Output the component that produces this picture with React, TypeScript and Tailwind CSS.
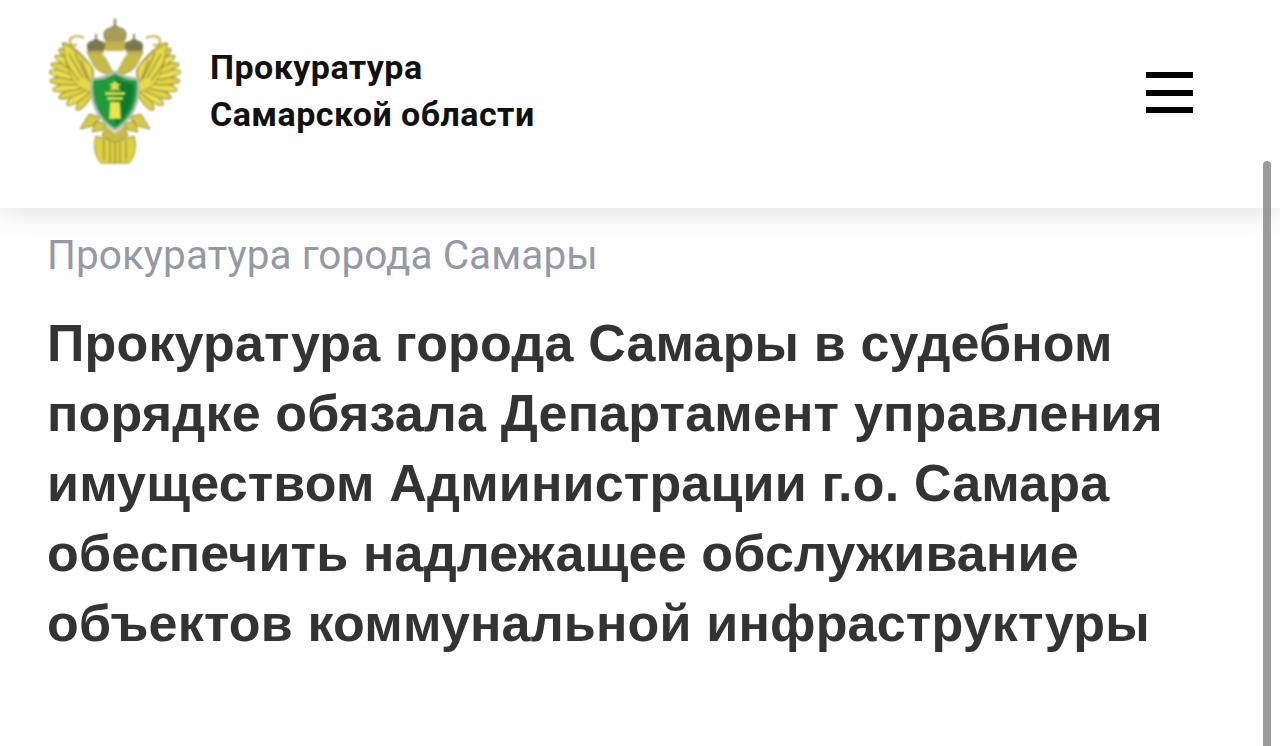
import React from 'react';

// tips of the wing feathers, left wing, in emblem coordinates
const tips = [
  [28, 92], [18, 87], [10, 80], [4, 72], [1, 63], [0, 54], [2, 46], [6, 38], [10, 31], [14, 25],
];

const Wing = () => (
  <g>
    {tips.map(([x, y], i) => {
      const bx = 44;
      const by = 54 + (9 - i) * 1.6;
      const dx = x - bx;
      const dy = y - by;
      const len = Math.sqrt(dx * dx + dy * dy);
      const angle = (Math.atan2(dy, dx) * 180) / Math.PI;
      return (
        <ellipse
          key={i}
          cx={bx + dx / 2}
          cy={by + dy / 2}
          rx={len / 2}
          ry={4.4}
          fill={i % 2 ? '#eadf52' : '#e0d244'}
          stroke="#8f8734"
          strokeWidth={1}
          transform={`rotate(${angle} ${bx + dx / 2} ${by + dy / 2})`}
        />
      );
    })}
    <path d="M14 25c10 6 20 14 29 24l2 26c-9-2-17-6-21-13-5-10-9-25-10-37z" fill="#e6da4a" stroke="#968d36" strokeWidth="0.9" />
    <path d="M20 36l14 24M26 35l12 26M16 43l14 20M32 42l9 22" stroke="#968d36" strokeWidth="1.3" fill="none" />
    <path d="M35 20c-8-4-15-1-14 4 1 4 5 4 7 2" fill="none" stroke="#c8bc52" strokeWidth="2.4" />
    <path d="M40 96l-9 15 13-3 8-9zM47 103l-4 11 10-2 4-6z" fill="#d6c948" stroke="#8f8734" strokeWidth="0.9" />
  </g>
);

const Crown = ({ x, y, s, fill }: { x: number; y: number; s: number; fill: string }) => (
  <g transform={`translate(${x} ${y}) scale(${s})`}>
    <path d="M-8 6c-3-6 0-10 4-10l4-3 4 3c4 0 7 4 4 10z" fill={fill} stroke="#6c6942" strokeWidth="0.7" />
    <path d="M-8 6h16v3H-8z" fill="#b8ac4c" />
    <rect x="-1" y="-12" width="2" height="5" fill="#8f8a68" />
  </g>
);

const Emblem = () => (
  <svg viewBox="0 0 132 146" className="w-[132px] h-[146px] shrink-0 blur-[0.8px]">
    <Wing />
    <g transform="translate(132 0) scale(-1 1)">
      <Wing />
    </g>
    {/* necks and heads */}
    <path d="M38 33c8-2 16 2 20 10 3 6 5 10 8 15-8-2-16-3-20-9-3-5-6-10-8-16z" fill="#c7bb48" stroke="#8f8a3c" strokeWidth="0.8" />
    <path d="M94 33c-8-2-16 2-20 10-3 6-5 10-8 15 8-2 16-3 20-9 3-5 6-10 8-16z" fill="#c7bb48" stroke="#8f8a3c" strokeWidth="0.8" />
    <path d="M52 24h28l-5 9h-18z" fill="#c2b54c" />
    <path d="M66 33l3 6 6 3-6 3-3 6-3-6-6-3 6-3z" fill="#ffffff" />
    <Crown x={47} y={27} s={0.95} fill="#7b7750" />
    <Crown x={85} y={27} s={0.95} fill="#7b7750" />
    <Crown x={66} y={15} s={1.2} fill="#a89d58" />
    {/* tail */}
    <path d="M47 118c-3 10-1 21 5 27h28c6-6 8-17 5-27l-19 6z" fill="#dfd143" stroke="#9c9338" strokeWidth="1" />
    <path d="M55 122v20M61 124v21M66 124v22M71 124v21M77 122v20" stroke="#9c9338" strokeWidth="1.3" />
    <path d="M56 108l10 8 10-8 3 10-13 7-13-7z" fill="#c9bc44" stroke="#9c9338" strokeWidth="0.8" />
    {/* shield */}
    <path d="M66 54c7 5 15 7 23 7 2 20-4 39-23 51-19-12-25-31-23-51 8 0 16-2 23-7z" fill="#1f9a3c" stroke="#b4b9b0" strokeWidth="3" />
    <path d="M66 60c5 3 11 5 18 6 1 16-3 31-18 41z" fill="#0d7c2e" />
    {/* pillar */}
    <path d="M66 62l2 3 4 1-3 3 3 3H60l3-3-3-3 4-1z" fill="#e5d84a" />
    <rect x="56" y="74" width="20" height="3" fill="#e5d84a" />
    <rect x="58" y="79" width="16" height="3" fill="#e5d84a" />
    <path d="M61 84h10l1 17H60z" fill="#efe24f" />
  </svg>
);

export default function App() {
  return (
    <div className="relative w-full h-[746px] overflow-hidden bg-white font-['Roboto',sans-serif]">
      <header className="h-[208px] pl-[49px] pr-[87px] pt-[18px] flex items-start justify-between shadow-[0_4px_30px_rgba(0,0,0,0.12)] bg-white relative">
        <div className="flex items-start gap-[29px]">
          <Emblem />
          <div className="pt-[26px] text-[34px] leading-[47px] font-bold tracking-[0.45px] text-[#111111]">
            <div>Прокуратура</div>
            <div>Самарской области</div>
          </div>
        </div>
        <div className="mt-[54px] w-[47px] flex flex-col gap-[11.5px]">
          <div className="h-[6px] bg-black" />
          <div className="h-[6px] bg-black" />
          <div className="h-[6px] bg-black" />
        </div>
      </header>
      <main className="pl-[47px] pr-[48px] pt-[24px]">
        <div className="text-[40.5px] leading-[46px] tracking-[0.06px] text-[#9499a6]">Прокуратура города Самары</div>
        <h1 className="mt-[30px] font-['Liberation_Sans',sans-serif] text-[52px] leading-[70px] font-bold tracking-[0.17px] text-[#333333]">
          <div>Прокуратура города Самары в судебном</div>
          <div>порядке обязала Департамент управления</div>
          <div>имуществом Администрации г.о. Самара</div>
          <div>обеспечить надлежащее обслуживание</div>
          <div>объектов коммунальной инфраструктуры</div>
        </h1>
      </main>
      {/* scrollbar overlay */}
      <div className="absolute right-[9px] top-[161px] bottom-0 w-[8px] rounded-t-full bg-[#9a9a9a]" />
    </div>
  );
}
